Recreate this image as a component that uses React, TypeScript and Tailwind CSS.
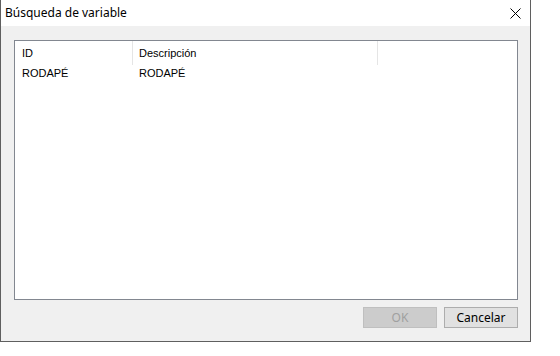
import React from 'react';

const rows = [{ id: 'RODAPÉ', desc: 'RODAPÉ' }];

function CloseIcon() {
  return (
    <svg width="11" height="11" viewBox="0 0 11 11" className="block">
      <path d="M0.5 0.5 L10.5 10.5 M10.5 0.5 L0.5 10.5" stroke="#000" strokeWidth="1" fill="none" />
    </svg>
  );
}

export default function App() {
  return (
    <div className="w-[560px] h-[356px] bg-white">
      <div className="w-[531px] h-[342px] flex flex-col bg-[#f0f0f0] border-x border-b border-[#5f5f5f]">
        {/* Title bar */}
        <div className="h-[26px] bg-white flex items-center justify-between pl-[4px] pr-[9px]">
          <span className="text-[12px] text-black font-['Segoe_UI','Noto_Sans',sans-serif]">Búsqueda de variable</span>
          <CloseIcon />
        </div>

        {/* Body */}
        <div className="flex-1 flex flex-col pl-[13px] pr-[12px] pt-[14px] pb-[13px] font-['Liberation_Sans',Arial,sans-serif] text-[11px] text-black">
          <div className="h-[260px] bg-white border border-[#828790]">
            <div className="flex h-[24px] items-center">
              <div className="w-[118px] h-full flex items-center pl-[7px] border-r border-[#e5e5e5]">ID</div>
              <div className="w-[245px] h-full flex items-center pl-[6px] border-r border-[#e5e5e5]">Descripción</div>
            </div>
            {rows.map((r) => (
              <div key={r.id} className="flex h-[17px] items-center">
                <div className="w-[118px] pl-[7px]">{r.id}</div>
                <div className="pl-[6px]">{r.desc}</div>
              </div>
            ))}
          </div>
          <div className="flex justify-end gap-[7px] mt-[7px]">
            <button className="w-[74px] h-[21px] bg-[#cccccc] border border-[#bfbfbf] text-[#a0a0a0] text-[12px] font-['Segoe_UI','Noto_Sans',sans-serif] leading-none" disabled>
              OK
            </button>
            <button className="w-[74px] h-[21px] bg-[#e1e1e1] border border-[#adadad] text-black text-[12px] font-['Segoe_UI','Noto_Sans',sans-serif] leading-none">
              Cancelar
            </button>
          </div>
        </div>
      </div>
    </div>
  );
}
